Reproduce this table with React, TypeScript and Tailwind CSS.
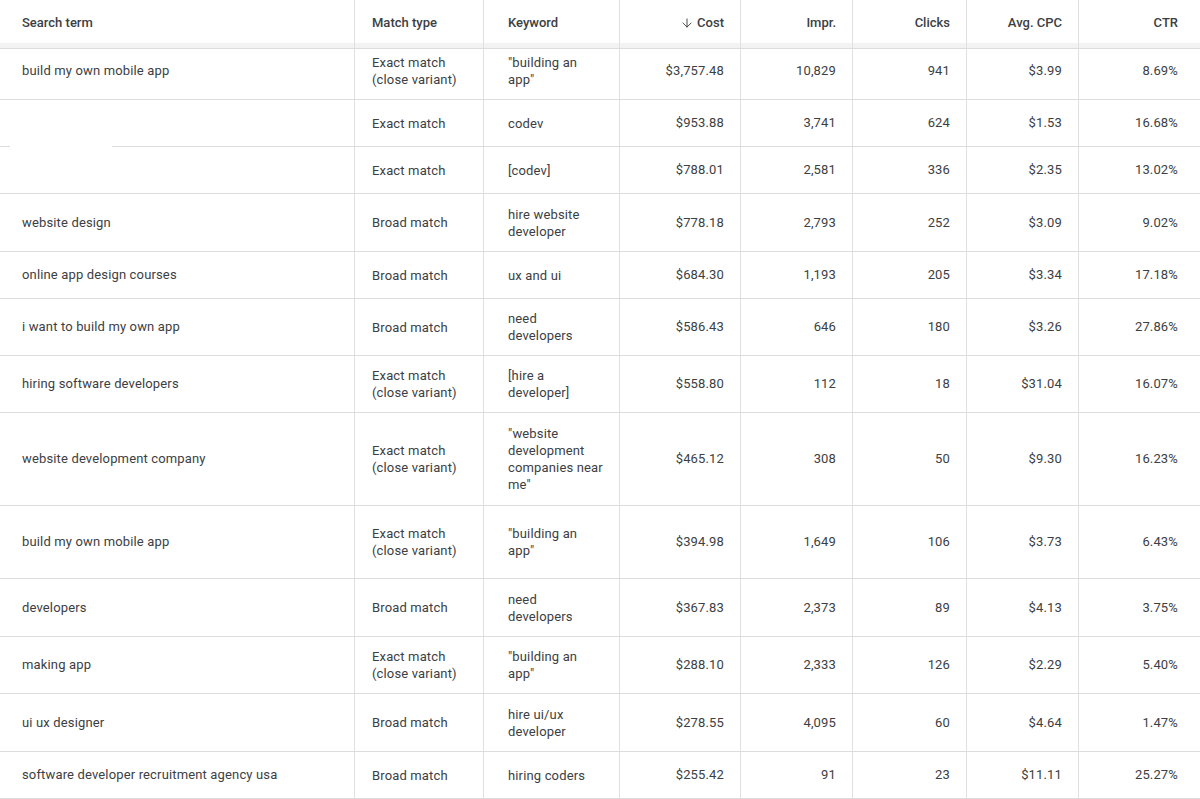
import React from 'react';
import { ArrowDown } from 'lucide-react';

interface Row {
    term: string;
    match: string[];
    keyword: string[];
    cost: string;
    impr: string;
    clicks: string;
    cpc: string;
    ctr: string;
    h: string;
    pad?: string;
}

const CV = ['Exact match', '(close variant)'];

const rows: Row[] = [
    { term: 'build my own mobile app', match: CV, keyword: ['"building an', 'app"'], cost: '$3,757.48', impr: '10,829', clicks: '941', cpc: '$3.99', ctr: '8.69%', h: 'h-[51px]', pad: 'pb-[6px]' },
    { term: '', match: ['Exact match'], keyword: ['codev'], cost: '$953.88', impr: '3,741', clicks: '624', cpc: '$1.53', ctr: '16.68%', h: 'h-[47px]' },
    { term: '', match: ['Exact match'], keyword: ['[codev]'], cost: '$788.01', impr: '2,581', clicks: '336', cpc: '$2.35', ctr: '13.02%', h: 'h-[47px]' },
    { term: 'website design', match: ['Broad match'], keyword: ['hire website', 'developer'], cost: '$778.18', impr: '2,793', clicks: '252', cpc: '$3.09', ctr: '9.02%', h: 'h-[58px]' },
    { term: 'online app design courses', match: ['Broad match'], keyword: ['ux and ui'], cost: '$684.30', impr: '1,193', clicks: '205', cpc: '$3.34', ctr: '17.18%', h: 'h-[47px]' },
    { term: 'i want to build my own app', match: ['Broad match'], keyword: ['need', 'developers'], cost: '$586.43', impr: '646', clicks: '180', cpc: '$3.26', ctr: '27.86%', h: 'h-[57px]' },
    { term: 'hiring software developers', match: CV, keyword: ['[hire a', 'developer]'], cost: '$558.80', impr: '112', clicks: '18', cpc: '$31.04', ctr: '16.07%', h: 'h-[57px]' },
    { term: 'website development company', match: CV, keyword: ['"website', 'development', 'companies near', 'me"'], cost: '$465.12', impr: '308', clicks: '50', cpc: '$9.30', ctr: '16.23%', h: 'h-[93px]' },
    { term: 'build my own mobile app', match: CV, keyword: ['"building an', 'app"'], cost: '$394.98', impr: '1,649', clicks: '106', cpc: '$3.73', ctr: '6.43%', h: 'h-[73px]' },
    { term: 'developers', match: ['Broad match'], keyword: ['need', 'developers'], cost: '$367.83', impr: '2,373', clicks: '89', cpc: '$4.13', ctr: '3.75%', h: 'h-[58px]' },
    { term: 'making app', match: CV, keyword: ['"building an', 'app"'], cost: '$288.10', impr: '2,333', clicks: '126', cpc: '$2.29', ctr: '5.40%', h: 'h-[57px]' },
    { term: 'ui ux designer', match: ['Broad match'], keyword: ['hire ui/ux', 'developer'], cost: '$278.55', impr: '4,095', clicks: '60', cpc: '$4.64', ctr: '1.47%', h: 'h-[58px]' },
    { term: 'software developer recruitment agency usa', match: ['Broad match'], keyword: ['hiring coders'], cost: '$255.42', impr: '91', clicks: '23', cpc: '$11.11', ctr: '25.27%', h: 'h-[47px]' },
];

const GRID = 'grid grid-cols-[355px_129px_136px_121px_112px_114px_112px_121px]';
const CELL = 'flex items-center border-r border-[#e0e0e0]';

const Lines = ({ lines }: { lines: string[] }) => (
    <div className="leading-[17px]">
        {lines.map((l, i) => (
            <div key={i}>{l}</div>
        ))}
    </div>
);

export default function App() {
    return (
        <div className="w-[1200px] h-[799px] overflow-hidden bg-white text-[13px] text-[#3c4043] font-['Roboto',_'Liberation_Sans',_sans-serif]">
            {/* Header */}
            <div className={`${GRID} h-[49px] border-b border-[#dcdcdc] font-medium bg-[linear-gradient(to_bottom,#ffffff_0,#ffffff_43px,#f3f3f3_43px,#f3f3f3_100%)]`}>
                <div className={`${CELL} pl-[22px] pb-[3px]`}>Search term</div>
                <div className={`${CELL} pl-[17px] pb-[3px]`}>Match type</div>
                <div className={`${CELL} pl-6 pb-[3px]`}>Keyword</div>
                <div className={`${CELL} justify-end pr-4 pb-[3px] gap-[3px]`}>
                    <ArrowDown className="w-[14px] h-[14px]" strokeWidth={1.6} />
                    Cost
                </div>
                <div className={`${CELL} justify-end pr-4 pb-[3px]`}>Impr.</div>
                <div className={`${CELL} justify-end pr-4 pb-[3px]`}>Clicks</div>
                <div className={`${CELL} justify-end pr-4 pb-[3px]`}>Avg. CPC</div>
                <div className="flex items-center justify-end pr-[22px] pb-[3px]">CTR</div>
            </div>

            {rows.map((r, i) => {
                const p = r.pad ?? '';
                return (
                    <div key={i} className={`${GRID} ${r.h} border-b border-[#dcdcdc] tracking-[0.15px]`}>
                        <div className={`${CELL} ${p} pl-[22px] relative`}>
                            {r.term}
                            {i === 1 && <span className="absolute left-[10px] bottom-[-1px] w-[102px] h-[2px] bg-white" />}
                        </div>
                        <div className={`${CELL} ${p} pl-[17px]`}>
                            <Lines lines={r.match} />
                        </div>
                        <div className={`${CELL} ${p} pl-6`}>
                            <Lines lines={r.keyword} />
                        </div>
                        <div className={`${CELL} ${p} justify-end pr-4`}>{r.cost}</div>
                        <div className={`${CELL} ${p} justify-end pr-4`}>{r.impr}</div>
                        <div className={`${CELL} ${p} justify-end pr-4`}>{r.clicks}</div>
                        <div className={`${CELL} ${p} justify-end pr-4`}>{r.cpc}</div>
                        <div className={`flex items-center ${p} justify-end pr-[22px]`}>{r.ctr}</div>
                    </div>
                );
            })}
        </div>
    );
}
